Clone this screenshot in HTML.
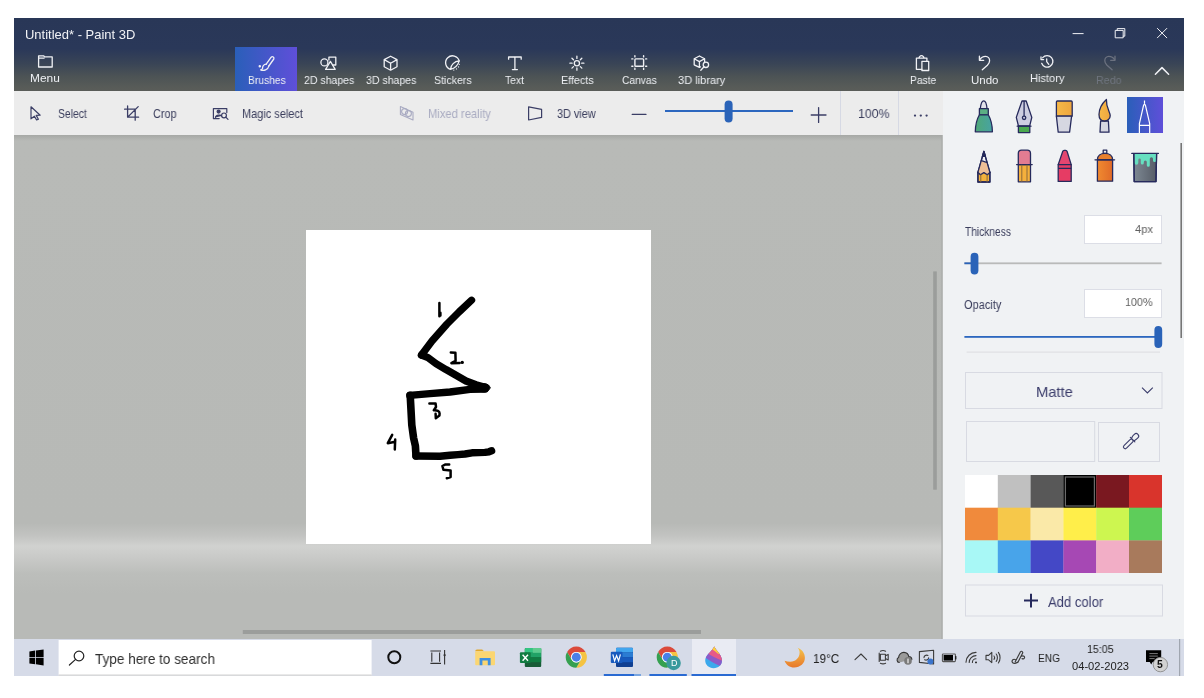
<!DOCTYPE html>
<html><head><meta charset="utf-8">
<style>
*{margin:0;padding:0;box-sizing:border-box}
html,body{width:1204px;height:698px;overflow:hidden;background:#fff;font-family:"Liberation Sans",sans-serif}
.a{position:absolute}
.t{position:absolute;line-height:1;white-space:nowrap}
#ribbon{left:14px;top:18px;width:1170px;height:73px;background:linear-gradient(to bottom,#293757 0%,#2a3859 42%,#394456 62%,#4c5355 80%,#575b58 94%,#5a5d59 100%)}
#toolbar{left:14px;top:91px;width:928.8px;height:44px;background:#ececec}
#cbg{left:14px;top:135px;width:928px;height:504px;background:linear-gradient(to bottom,#b8bab7 0%,#b7b9b6 77%,#c2c3c1 79.5%,#d1d2d0 81.6%,#c8c9c7 84%,#bcbebb 87%,#b8bab7 91%,#b8bab7 100%)}
#paper{left:306px;top:230px;width:345px;height:314px;background:#fff}
#panel{left:942.8px;top:91px;width:241.2px;height:548px;background:#f0f2f4}
#taskbar{left:14px;top:639px;width:1170px;height:37px;background:#d6dbe8}
.rl{position:absolute;line-height:1;white-space:nowrap;color:#eef0f4;font-size:10.6px;text-align:center;width:80px}
.tb{position:absolute;line-height:1;white-space:nowrap;color:#3a3d5c;font-size:10.9px}
svg{position:absolute;left:0;top:0}
.t,.rl,.tb{-webkit-font-smoothing:antialiased;will-change:transform;transform-origin:0 0}
</style></head><body>
<div id="ribbon" class="a"></div>
<div id="toolbar" class="a"></div>
<div id="cbg" class="a"></div>
<div class="a" style="left:14px;top:135px;width:928px;height:6px;background:linear-gradient(to bottom,#a6a8a5,rgba(183,185,182,0))"></div>
<div id="paper" class="a"></div>
<div id="panel" class="a"></div>
<div id="taskbar" class="a"></div>
<div class="a" style="left:235px;top:47px;width:62px;height:44px;background:linear-gradient(to right,#2a5fb9,#5f4fd9)"></div>
<div class="a" style="left:1126.5px;top:97px;width:36.5px;height:36px;background:linear-gradient(to right,#2a5fb9,#5f4fd9)"></div>
<div class="a" style="left:691.5px;top:639px;width:44.5px;height:37px;background:#e9ebf3"></div>

<svg width="1204" height="698" viewBox="0 0 1204 698">
<defs>
<linearGradient id="gMark" x1="0" x2="1"><stop offset="0" stop-color="#4fa877"/><stop offset="1" stop-color="#47a3a3"/></linearGradient>
<linearGradient id="gOr" x1="0" x2="1"><stop offset="0" stop-color="#f7b948"/><stop offset="1" stop-color="#eea63e"/></linearGradient>
<linearGradient id="gSpray" x1="0" x2="1"><stop offset="0" stop-color="#f08a30"/><stop offset="1" stop-color="#e06a28"/></linearGradient>
<linearGradient id="gBucket" x1="0" x2="1"><stop offset="0" stop-color="#7d8893"/><stop offset="1" stop-color="#565c66"/></linearGradient>
<linearGradient id="gMoon" x1="0" y1="0" x2="0" y2="1"><stop offset="0" stop-color="#f4c44c"/><stop offset="1" stop-color="#e8782a"/></linearGradient>
<linearGradient id="gP3d" x1="0" y1="0" x2="0" y2="1"><stop offset="0" stop-color="#fcd03a"/><stop offset="0.3" stop-color="#f05a8c"/><stop offset="0.6" stop-color="#9a5ad0"/><stop offset="1" stop-color="#2aa8f0"/></linearGradient>
</defs>

<!-- ===== RIBBON ICONS (white) ===== -->
<g fill="none" stroke="#f0f1f5" stroke-width="1.3" stroke-linejoin="round" stroke-linecap="round">
 <!-- menu folder -->
 <path d="M38.6,67 V55.8 H43.6 L44.6,56.9 H52.2 V67 Z M38.6,58.2 H44"/>
 <!-- brush -->
 <path d="M266.2,64.2 L271.2,57.2 A1.6,1.6 0 0 1 273.8,59 L268.8,66"/>
 <path d="M266.2,64.2 C263.6,64.4 262.4,66.4 262.6,68.2 C262.2,69.2 261.2,69.8 260.6,69.8 C263.6,71.2 268.2,69.8 268.8,66"/>
 <circle cx="259.8" cy="66.3" r="0.6" fill="#f0f1f5"/>
 <!-- 2D shapes -->
 <circle cx="324.4" cy="62.4" r="3.5"/>
 <path d="M328.9,57.2 H335.8 V65 H332.6 M328.9,57.2 V60"/>
 <path d="M330.4,61.4 L335.2,69.4 H325.6 Z"/>
 <!-- 3D shapes -->
 <path d="M390.6,56.2 L397,59.6 V66.8 L390.6,70.2 L384.2,66.8 V59.6 Z M384.2,59.6 L390.6,63.2 L397,59.6 M390.6,63.2 V70.2"/>
 <!-- stickers -->
 <path d="M450.5,69.3 A6.9,6.9 0 1 1 459.2,60.9"/>
 <path d="M450.5,69.3 C450.7,65 454.4,61.2 459.2,60.9 C458,65.2 454.8,68.3 450.5,69.3"/>
 <circle cx="459.3" cy="64.3" r="0.65" fill="#f0f1f5" stroke="none"/>
 <circle cx="458.5" cy="66.9" r="0.65" fill="#f0f1f5" stroke="none"/>
 <circle cx="456.5" cy="68.9" r="0.65" fill="#f0f1f5" stroke="none"/>
 <circle cx="453.8" cy="70.1" r="0.65" fill="#f0f1f5" stroke="none"/>
 <!-- text T -->
 <path d="M508.6,59.2 V57 H521.2 V59.2 M514.9,57 V69.6 M512.4,69.6 H517.4"/>
 <!-- effects sun -->
 <circle cx="576.9" cy="63.2" r="2.6"/>
 <path d="M576.9,56.2 V58.4 M576.9,68 V70.2 M569.9,63.2 H572.1 M581.7,63.2 H583.9 M571.95,58.25 L573.5,59.8 M580.3,66.6 L581.85,68.15 M571.95,68.15 L573.5,66.6 M580.3,59.8 L581.85,58.25"/>
 <!-- canvas -->
 <rect x="634.9" y="58.9" width="8.7" height="7.4" rx="0.8" stroke-width="1.4"/>
 <path d="M634.9,55.8 V56.9 M643.6,55.8 V56.9 M634.9,68.3 V69.4 M643.6,68.3 V69.4 M631.8,58.9 H632.9 M645.6,58.9 H646.7 M631.8,66.3 H632.9 M645.6,66.3 H646.7" stroke-width="1.4"/>
 <!-- 3D library -->
 <path d="M699.4,56 L704.6,58.8 V62.6 M699.4,56 L694.2,58.8 V64.8 L699.4,67.4 L700.4,66.9 M694.2,58.8 L699.4,61.6 L704.6,58.8 M699.4,61.6 V67.4"/>
 <circle cx="705.9" cy="64.8" r="2.7"/>
 <path d="M704,66.8 L700.8,70.2"/>
 <!-- paste -->
 <path d="M921.9,69.3 H916.4 V58.1 H926.9 V61.3 M918.9,58.1 L919.6,56.6 Q921.5,54.6 923.4,56.6 L924.1,58.1"/>
 <rect x="921.9" y="61.3" width="6.8" height="9.2"/>
 <!-- undo -->
 <path d="M979.8,59.8 C981,57.6 983.2,56.4 985.6,56.4 C988,56.4 989.6,58.4 989.6,60.8 C989.6,62.6 988.6,64 987.4,65.2 L982.3,69.8"/>
 <path d="M979.4,56.2 V60.3 H983.7"/>
 <!-- history -->
 <path d="M1041.7,63.3 A5.75,5.75 0 1 0 1042.7,57.7"/>
 <path d="M1041,57 V59.6 H1043.6"/>
 <path d="M1046.7,58.8 V61.6 L1048.8,64.3"/>
 <!-- window controls -->
 <path d="M1073,33.6 H1083.2" stroke-width="1"/>
 <path d="M1115.6,30.4 H1123.2 V37.8 H1115.6 Z M1117.2,30.4 V28.6 H1124.8 V36.2 H1123.2" stroke-width="1"/>
 <path d="M1157.4,28.4 L1166.8,37.8 M1166.8,28.4 L1157.4,37.8" stroke-width="1"/>
 <path d="M1155.4,74.2 L1162,67.6 L1168.6,74.2" stroke-width="1.5"/>
</g>
<!-- redo disabled -->
<g fill="none" stroke="#6b717f" stroke-width="1.3" stroke-linecap="round" stroke-linejoin="round">
 <path d="M1114.6,59.8 C1113.4,57.6 1111.2,56.4 1108.8,56.4 C1106.4,56.4 1104.8,58.4 1104.8,60.8 C1104.8,62.6 1105.8,64 1107,65.2 L1112.1,69.8"/>
 <path d="M1115,56.2 V60.3 H1110.7"/>
</g>

<!-- ===== TOOLBAR ICONS ===== -->
<g fill="none" stroke="#3b3e66" stroke-width="1.2" stroke-linejoin="round" stroke-linecap="round">
 <!-- select cursor -->
 <path d="M31,106.8 L40.2,115.2 L36.2,115.4 L38.4,119.2 L36.6,120 L34.4,116.2 L31,118.8 Z"/>
 <!-- crop -->
 <path d="M127.6,106 V117.2 H138.6 M124.6,109.2 H135.2 V120.2 M128.2,116.6 L138.2,106.6" stroke-width="1.3"/>
 <!-- magic select -->
 <path d="M219.2,118.6 H213.4 V108.6 H226.8 V112.6"/>
 <circle cx="218.6" cy="111.6" r="1.5" fill="#3b3e66"/>
 <path d="M215.4,117.4 C215.8,114.6 221.4,114.6 221.6,116" fill="#3b3e66"/>
 <circle cx="224" cy="115.4" r="2.4"/>
 <path d="M225.8,117.2 L228,119.4"/>
 <!-- 3D view -->
 <path d="M528.6,106.8 L541.6,109.4 V117.4 L528.6,120 Z"/>
 <!-- minus plus -->
 <path d="M632.2,114.4 H646" stroke-width="1.2"/>
 <path d="M811.2,115 H826 M818.6,107.6 V122.4" stroke-width="1.3"/>
 <!-- dots -->
 <circle cx="915" cy="115.6" r="1.15" fill="#3b3e66" stroke="none"/>
 <circle cx="920.8" cy="115.6" r="1.15" fill="#3b3e66" stroke="none"/>
 <circle cx="926.6" cy="115.6" r="1.15" fill="#3b3e66" stroke="none"/>
</g>
<!-- mixed reality disabled -->
<g fill="none" stroke="#a9abc2" stroke-width="1.1" stroke-linejoin="round">
 <path d="M400.4,106.6 L413,112.2 V120 L400.4,114.4 Z"/>
 <circle cx="404.6" cy="111.6" r="3"/>
 <circle cx="408.4" cy="113.6" r="3"/>
</g>
<!-- toolbar separators & zoom slider -->
<rect x="840" y="91" width="1" height="44" fill="#d6d9e4"/>
<rect x="898" y="91" width="1" height="44" fill="#d6d9e4"/>
<rect x="665" y="110" width="128" height="2" fill="#2c67bf"/>
<rect x="724.6" y="100.4" width="8" height="22" rx="4" fill="#2a63b8"/>
<!-- canvas scrollbar -->
<rect x="933.2" y="271.4" width="3.6" height="218.3" fill="#9b9d9b"/>
<rect x="941.4" y="135" width="1.4" height="504" fill="#a9aba9"/>
<rect x="242.8" y="630" width="458.2" height="4" fill="#9b9d9b"/>

</svg>

<!-- title -->

<!-- ribbon labels -->

<!-- toolbar labels -->

<svg width="1204" height="698" viewBox="0 0 1204 698">
<g stroke="#262a5c" stroke-width="1.3" stroke-linejoin="round" stroke-linecap="round">
 <!-- marker -->
 <path d="M980.3,108.6 C980.8,104 982,100.8 983.7,100.8 C985.4,100.8 986.6,104 987,108.6 Z" fill="#e2e2ea"/>
 <rect x="979.4" y="108.6" width="8.9" height="6.2" fill="#5cae84"/>
 <path d="M979.4,114.8 C977,119 975.4,125 975.3,131.8 H992.4 C992.3,125 990.7,119 988.3,114.8 Z" fill="url(#gMark)"/>
 <!-- pen nib -->
 <path d="M1022,101 H1026.2 L1031.8,117.4 L1029.6,126.2 H1018.5 L1016.3,117.4 Z" fill="#cdcde0"/>
 <path d="M1024.1,101.5 V116" fill="none"/>
 <circle cx="1024.1" cy="117.8" r="1.7" fill="#cdcde0"/>
 <rect x="1018.4" y="126.2" width="11.4" height="6.4" fill="#4aa84e"/>
 <path d="M1017.2,126.2 H1031" fill="none"/>
 <!-- flat brush -->
 <path d="M1056.4,102 Q1056.4,101 1057.4,101 H1071.2 Q1072.2,101 1072.2,102 V116.2 H1056.4 Z" fill="url(#gOr)"/>
 <path d="M1056.4,116.2 L1058.2,132.2 H1069.6 L1071.6,116.2 Z" fill="#d6d7e1"/>
 <!-- round brush -->
 <path d="M1100.6,121 L1100,132.2 H1109 L1108.4,121 Z" fill="#d6d7e1"/>
 <path d="M1106.4,99.4 C1101.8,103.6 1099,109.8 1099,114.6 C1099,118.8 1101.4,121 1104.5,121 C1107.6,121 1110.2,118.8 1110.2,115.8 C1110.2,111.6 1106,108 1106.4,99.4 Z" fill="url(#gOr)"/>
 <!-- pencil -->
 <path d="M983.9,151.4 L977.9,172.4 H989.9 Z" fill="#f2f2f6"/>
 <rect x="977.9" y="172.4" width="12" height="9.6" fill="#f4b23c"/>
 <path d="M981.4,160.6 L977.9,172.4 L980.5,174.8 L983.9,172.6 L987.3,174.8 L989.9,172.4 L986.6,162.4 Z" fill="#eebf96" stroke="none"/>
 <path d="M981.4,160.6 L986.6,162.4 M977.9,172.4 L980.5,174.8 L983.9,172.6 L987.3,174.8 L989.9,172.4" fill="none"/>
 <path d="M983.9,151.4 L977.9,172.4 V182 H989.9 V172.4 Z" fill="none"/>
 <path d="M980.8,175 V182 M987.1,175 V182" fill="none" stroke="#8a6a3a" stroke-width="1"/>
 <path d="M983.9,151.4 L982.4,156.4 H985.4 Z" fill="#262a5c"/>
 <!-- eraser pencil -->
 <path d="M1018.3,164.6 V153.4 Q1018.3,150.2 1021.5,150.2 H1027.3 Q1030.5,150.2 1030.5,153.4 V164.6 Z" fill="#e27c92"/>
 <rect x="1018.3" y="164.6" width="12.2" height="17.2" fill="#f4b03c"/>
 <path d="M1016.6,164.6 H1032.2" fill="none"/>
 <path d="M1021.8,165.2 V181.4 M1027,165.2 V181.4" fill="none" stroke="#8a6a3a" stroke-width="1"/>
 <!-- crayon -->
 <path d="M1062.6,151.8 Q1062.9,150.4 1064.2,150.4 H1065.6 Q1066.9,150.4 1067.2,151.8 L1071.2,164.6 H1058.2 Z" fill="#e44670"/>
 <rect x="1058.2" y="164.6" width="13" height="16.8" fill="#e63c64"/>
 <path d="M1058.6,168.4 H1070.8" fill="none" stroke-width="1.1"/>
 <!-- spray -->
 <rect x="1103.2" y="150.2" width="3.6" height="3.2" fill="#f0f2f4"/>
 <path d="M1097.4,159.8 C1097.4,155.8 1100.6,153.4 1105,153.4 C1109.4,153.4 1112.6,155.8 1112.6,159.8 Z" fill="#e8802e"/>
 <rect x="1097.4" y="159.8" width="15.2" height="21.4" fill="url(#gSpray)"/>
 <path d="M1095,159.8 H1114.6" fill="none"/>
 <!-- bucket -->
 <path d="M1133.8,153.6 L1134.2,181.6 H1156 L1156.6,153.6 Z" fill="url(#gBucket)"/>
 <path d="M1134.6,154 H1156.3 V160.4 A1.65,1.65 0 0 1 1153,160.4 V158.8 A1.6,1.6 0 0 0 1149.8,158.8 V165.2 A1.5,1.5 0 0 1 1146.8,165.2 V162 A1.5,1.5 0 0 0 1143.8,162 V163 A1.5,1.5 0 0 1 1140.8,163 V159.8 A1.25,1.25 0 0 0 1138.3,159.8 V162.8 A1.85,1.85 0 0 1 1134.6,162.8 Z" fill="#66dfc0" stroke="none"/>
 <path d="M1133.8,153.6 L1134.2,181.6 H1156 L1156.6,153.6" fill="none"/>
 <path d="M1131.8,153.4 H1158.4" fill="none"/>
</g>
<!-- selected pen (white) -->
<g fill="none" stroke="#fff" stroke-width="1.2" stroke-linejoin="round">
 <path d="M1144.5,100.6 V103.8 M1139.4,133 V123.6 L1143.6,105.2 Q1144.5,103.4 1145.4,105.2 L1149.7,123.6 V133 M1139.4,125.4 H1149.7"/>
</g>
<!-- scrollbar -->
<rect x="1180.4" y="143" width="1.6" height="195" fill="#767676"/>


<!-- thickness/opacity boxes -->
<rect x="1084.5" y="215.5" width="77" height="28" fill="#fff" stroke="#dcdee6" stroke-width="1"/>
<rect x="1084.5" y="289.5" width="77" height="28" fill="#fff" stroke="#dcdee6" stroke-width="1"/>
<!-- thickness slider -->
<rect x="964.4" y="262.4" width="197.2" height="1.8" fill="#b9bab9"/>
<rect x="964.4" y="262.4" width="8" height="1.8" fill="#2a63b8"/>
<rect x="970.6" y="252.8" width="7.8" height="21.6" rx="3.9" fill="#2a63b8"/>
<!-- opacity slider -->
<rect x="964.4" y="336" width="194" height="1.8" fill="#2c67bf"/>
<rect x="1154.4" y="326" width="7.8" height="22" rx="3.9" fill="#2a63b8"/>
<rect x="966.6" y="351.6" width="193.4" height="1" fill="#dcdde0"/>
<!-- matte dropdown -->
<rect x="965.5" y="372.5" width="196.5" height="36" fill="none" stroke="#d8dae2" stroke-width="1"/>
<path d="M1142,387.6 L1147.4,393 L1152.8,387.6" fill="none" stroke="#3b3d6b" stroke-width="1.1"/>
<!-- color preview + eyedropper -->
<rect x="966.5" y="421.5" width="128.2" height="40" fill="none" stroke="#d8dae2" stroke-width="1"/>
<rect x="1098.5" y="422.5" width="61" height="39" fill="none" stroke="#d8dae2" stroke-width="1"/>
<g fill="none" stroke="#3b3d6b" stroke-width="1.1" stroke-linejoin="round" stroke-linecap="round" transform="translate(1132.6,439.6) rotate(-45)">
 <rect x="-12.2" y="-1.8" width="12.2" height="3.6" rx="1.8"/>
 <path d="M0,-3.2 V3.2"/>
 <path d="M0.2,-1.8 C1.2,-1.8 1.6,-2.5 3.4,-2.5 H5 A2.5,2.5 0 0 1 5,2.5 H3.4 C1.6,2.5 1.2,1.8 0.2,1.8"/>
</g>
<!-- palette -->
<g>
<rect x="965" y="475" width="33" height="33" fill="#ffffff"/>
<rect x="997.8" y="475" width="33" height="33" fill="#c0c0c0"/>
<rect x="1030.6" y="475" width="33" height="33" fill="#585858"/>
<rect x="1063.4" y="475" width="33" height="33" fill="#000000"/>
<rect x="1096.2" y="475" width="33" height="33" fill="#7a1820"/>
<rect x="1129" y="475" width="33" height="33" fill="#d9342c"/>
<rect x="965" y="507.7" width="33" height="33" fill="#f08a3c"/>
<rect x="997.8" y="507.7" width="33" height="33" fill="#f6c84a"/>
<rect x="1030.6" y="507.7" width="33" height="33" fill="#fae9a8"/>
<rect x="1063.4" y="507.7" width="33" height="33" fill="#ffee4a"/>
<rect x="1096.2" y="507.7" width="33" height="33" fill="#cdf650"/>
<rect x="1129" y="507.7" width="33" height="33" fill="#5ecd5a"/>
<rect x="965" y="540.4" width="33" height="32.6" fill="#a8f8f6"/>
<rect x="997.8" y="540.4" width="33" height="32.6" fill="#48a4ea"/>
<rect x="1030.6" y="540.4" width="33" height="32.6" fill="#4448c6"/>
<rect x="1063.4" y="540.4" width="33" height="32.6" fill="#a648b4"/>
<rect x="1096.2" y="540.4" width="33" height="32.6" fill="#f2aec6"/>
<rect x="1129" y="540.4" width="33" height="32.6" fill="#a87a5c"/>
<rect x="1065.4" y="477" width="29" height="29" fill="none" stroke="#6a6a6a" stroke-width="1.2"/>
</g>
<!-- add color -->
<rect x="965.5" y="585" width="197" height="31" fill="none" stroke="#d8dae2" stroke-width="1"/>
<path d="M1024,600.6 H1038 M1031,593.8 V607.4" stroke="#262a5c" stroke-width="2"/>
</svg>

<!-- panel labels -->


<svg width="1204" height="698" viewBox="0 0 1204 698">
<!-- search box -->
<rect x="58.6" y="640" width="313" height="35.6" fill="#fff"/>
<rect x="58.6" y="674.6" width="313" height="1" fill="#c8c8c8"/>
<!-- windows logo -->
<path d="M29.4,651.4 L35.2,650.6 V657 H29.4 Z M36,650.5 L43.6,649.4 V657 H36 Z M29.4,657.8 H35.2 V664.2 L29.4,663.4 Z M36,657.8 H43.6 V665.4 L36,664.3 Z" fill="#000"/>
<!-- search icon -->
<g fill="none" stroke="#222" stroke-width="1.2" stroke-linecap="round">
 <circle cx="79" cy="656" r="4.8"/>
 <path d="M75.6,659.4 L69.4,665"/>
</g>
<!-- cortana -->
<circle cx="394.3" cy="657.3" r="6" fill="none" stroke="#111" stroke-width="2"/>
<!-- task view -->
<g fill="none" stroke="#333" stroke-width="1.1">
 <path d="M430.4,651 H441 M430.4,663.4 H441 M431.8,652.6 V661.8 M439.6,652.6 V661.8 M444.6,650 V664.4"/>
</g>
<circle cx="444.6" cy="655.2" r="1.1" fill="#333"/>
<!-- file explorer -->
<path d="M475.2,651.4 Q475.2,649.6 477,649.6 H482.2 L484,651.2 H475.2 Z" fill="#e2a82a"/>
<rect x="475.2" y="651.2" width="19.8" height="14" rx="1" fill="#fbd672"/>
<path d="M479.6,665.2 V658 H490.6 V665.2 H487.8 V660.6 H482.4 V665.2 Z" fill="#3e8fe2"/>
<!-- excel -->
<rect x="524.8" y="648" width="16.4" height="19" rx="1" fill="#185c37"/>
<rect x="524.8" y="648" width="16.4" height="4.8" rx="1" fill="#33c481"/>
<rect x="524.8" y="652.6" width="16.4" height="4.8" fill="#21a366"/>
<rect x="524.8" y="657.4" width="16.4" height="4.8" fill="#107c41"/>
<rect x="532.8" y="648" width="8.4" height="4.8" fill="#5ecb8e"/>
<rect x="519.9" y="652.3" width="10.8" height="10.8" rx="1" fill="#107c41"/>
<path d="M522.6,654.8 L528,660.8 M528,654.8 L522.6,660.8" stroke="#fff" stroke-width="1.4"/>
<!-- chrome -->
<g transform="translate(576.3,657.2)">
 <g transform="scale(10.6)">
 <path d="M0,-0.5 L0.866,-0.5 A1,1 0 0 0 -0.866,-0.5 L-0.433,0.25 A0.5,0.5 0 0 1 0,-0.5 Z" fill="#db4a3a"/>
 <path d="M0.433,0.25 L0,1 A1,1 0 0 0 0.866,-0.5 L0,-0.5 A0.5,0.5 0 0 1 0.433,0.25 Z" fill="#f5c342"/>
 <path d="M-0.433,0.25 L-0.866,-0.5 A1,1 0 0 0 0,1 L0.433,0.25 A0.5,0.5 0 0 1 -0.433,0.25 Z" fill="#36a050"/>
 <circle r="0.5" fill="#fff"/>
 <circle r="0.42" fill="#4a80e8"/>
 </g>
</g>
<!-- word -->
<rect x="616" y="647.7" width="17" height="19.4" rx="1" fill="#103f91"/>
<rect x="616" y="647.7" width="17" height="4.9" rx="1" fill="#41a5ee"/>
<rect x="616" y="652.5" width="17" height="4.9" fill="#2b7cd3"/>
<rect x="616" y="657.3" width="17" height="4.9" fill="#185abd"/>
<rect x="610.8" y="651.7" width="11.7" height="11.3" rx="1" fill="#185abd"/>
<path d="M612.8,654.4 L614.6,660.8 L616.6,655.6 L618.6,660.8 L620.4,654.4" fill="none" stroke="#fff" stroke-width="1.2"/>
<rect x="603.8" y="674" width="30.2" height="2" fill="#2a6ad2"/>
<rect x="634" y="674" width="7" height="2" fill="#7aa6e0"/>
<!-- chrome D -->
<g transform="translate(667.3,657.2)">
 <g transform="scale(10.6)">
 <path d="M0,-0.5 L0.866,-0.5 A1,1 0 0 0 -0.866,-0.5 L-0.433,0.25 A0.5,0.5 0 0 1 0,-0.5 Z" fill="#db4a3a"/>
 <path d="M0.433,0.25 L0,1 A1,1 0 0 0 0.866,-0.5 L0,-0.5 A0.5,0.5 0 0 1 0.433,0.25 Z" fill="#f5c342"/>
 <path d="M-0.433,0.25 L-0.866,-0.5 A1,1 0 0 0 0,1 L0.433,0.25 A0.5,0.5 0 0 1 -0.433,0.25 Z" fill="#36a050"/>
 <circle r="0.5" fill="#fff"/>
 <circle r="0.42" fill="#4a80e8"/>
 </g>
</g>
<circle cx="673.6" cy="663" r="7.2" fill="#3a9a9c"/>
<rect x="649.4" y="674" width="37.4" height="2" fill="#2a6ad2"/>
<!-- paint 3d -->
<clipPath id="dropc"><path d="M714.4,646.4 C716,651 721.9,654.2 721.9,660.6 C721.9,665.2 718.4,668.2 713.6,668.2 C708.8,668.2 705.2,665 705.2,660.6 C705.2,655 711,652.4 714.4,646.4 Z"/></clipPath>
<g clip-path="url(#dropc)">
 <rect x="700" y="643" width="28" height="28" fill="#3ba8ec"/>
 <path d="M700,643 H728 V668 L719,665.6 C714,663.4 709,660.4 705.6,657.8 L700,654.6 Z" fill="#8c5ac8"/>
 <path d="M700,643 H728 V661 L721.7,660.6 C716.4,658.4 711.4,655.6 706.8,653 L700,649.6 Z" fill="#e65a88"/>
 <path d="M700,643 H728 V656 L718,653.8 C716.2,652 714,650.4 711.6,649 L708,646 V643 Z" fill="#fcd23c"/>
</g>
<rect x="691.5" y="674" width="44.5" height="2" fill="#2a6ad2"/>
<!-- moon -->
<path d="M797.6,647.8 C802.2,649.6 804.9,653.4 804.9,657.8 C804.9,663.4 800.2,667.5 794.2,667.5 C789.8,667.5 786,664.8 784.6,660.7 C786.4,661.4 788.4,661.8 790.2,661.8 C795.6,661.8 799.6,657.8 799.6,652.6 C799.6,650.8 798.9,649.2 797.6,647.8 Z" fill="url(#gMoon)"/>
<!-- tray icons -->
<g fill="none" stroke="#3a3a3a" stroke-width="1.1" stroke-linecap="round" stroke-linejoin="round">
 <path d="M855,659.6 L861,654 L866.6,659.6"/>
 <!-- meet -->
 <path d="M879.2,653 V661.4 M880.4,651.2 C882,650.4 884,650.4 885.6,651.2 M880.4,663.2 C882,664 884,664 885.6,663.2 M880.4,654.2 H885.4 V660.2 H880.4 Z M885.4,655.8 L888.2,654.4 V660 L885.4,658.6"/>
 <!-- cloud -->
 <path d="M899.2,662.4 C896.8,662.4 896.2,658.6 898.6,657.6 C898.6,654.6 901.2,652.2 904,652.4 C906.8,652.6 908.4,654.6 908.8,656.6 C910.6,656.6 911.8,658 911.8,659.6" stroke="#333" fill="#9a9a9a"/>
 <!-- screen -->
 <path d="M919.4,651.6 L933.6,650.2 V664 L919.4,662.4 Z"/>
 <path d="M924,657.6 C924,655.8 926,654.6 928,655.4 M928.6,657.8 C928.6,659.6 926.6,660.6 924.6,659.8"/>
 <!-- battery -->
 <rect x="942.4" y="654" width="13" height="7.6" rx="0.8" stroke="#555"/>
 <path d="M955.8,656.6 V659" stroke="#111" stroke-width="1.2"/>
 <!-- wifi -->
 <path d="M966,662.2 A10,10 0 0 1 976,652.4 M969.2,662.4 A6.8,6.8 0 0 1 976,655.6 M972.4,662.4 A3.6,3.6 0 0 1 976,658.8"/>
 <!-- volume -->
 <path d="M986,655.4 H988.6 L991.8,652.4 V662.6 L988.6,659.8 H986 Z M994,656 C994.8,657 994.8,658.4 994,659.4 M996.2,654 C997.8,656 997.8,659.6 996.2,661.4 M998.4,652.4 C1000.6,655.4 1000.6,660.2 998.4,663"/>
 <!-- pen -->
 <path d="M1020.2,652.2 L1015.2,661.8 M1022.8,652.8 L1017.8,662.6 M1020.2,652.2 Q1021.8,650 1022.8,652.8 M1015.6,659.8 C1013.4,658.4 1011.6,660.2 1012.2,662 C1012.8,663.8 1015.6,663.6 1017.4,662.2 M1021.6,656.2 C1023.6,655.2 1025,656.6 1024.4,658 C1024,658.8 1023,659 1022,658.6" stroke-width="1.15"/>
</g>
<circle cx="976" cy="662.4" r="0.9" fill="#111"/>
<circle cx="908" cy="660.9" r="3.8" fill="#7a7a7a"/>
<rect x="907.3" y="658.6" width="1.4" height="4.6" fill="#e0e0e0"/>
<rect x="943.6" y="655" width="9.4" height="5.6" fill="#000"/>
<circle cx="930.4" cy="661.4" r="3" fill="#3a74cc"/>
<!-- notification -->
<path d="M1146,650.2 H1161.2 V662 H1152.6 L1151.2,664.6 L1149.8,662 H1146 Z" fill="#000"/>
<path d="M1149.4,653.6 H1157.8 M1149.4,656.1 H1157.8 M1149.4,658.6 H1154.6" stroke="#888" stroke-width="0.9"/>
<circle cx="1160.4" cy="664.6" r="7.2" fill="#d2d2d2" stroke="#8a8a8a" stroke-width="0.9"/>
<rect x="1179" y="639" width="1.2" height="37" fill="#a0a6b0"/>
</svg>

<!-- taskbar text -->
<div class="t" style="left:671px;top:658.5px;font-size:9px;color:#fff">D</div>
<div class="t" style="left:1157.2px;top:660.2px;font-size:10.4px;font-weight:bold;color:#111">5</div>

<!-- drawing -->
<svg width="1204" height="698" viewBox="0 0 1204 698">
<g fill="none" stroke="#000" stroke-linecap="round" stroke-linejoin="round">
 <path d="M471.6,300.2 L459,312 L447,324 L432,341 L421.5,355" stroke-width="7.2"/>
 <path d="M421.5,355 L428,357.6 L436,363.6 L446,369.6 L456,375.2 L466,381 L476,384.8 L486,387.6" stroke-width="7.4"/>
 <ellipse cx="484" cy="387.8" rx="6" ry="4.2"/>
 <path d="M485,389 L470,389.4 L450,392 L430,393.6 L409.8,395.4" stroke-width="7.4"/>
 <path d="M410.2,395.4 L411,410 L411.8,425 L413.6,438 L415.4,446 L416,456" stroke-width="7.6"/>
 <path d="M416,456 L440,456.3 L450,455.3 L458,454.6 L465,454 L472,452.8 L485,452.4 L489,451.8 L491.6,450.8" stroke-width="7.4"/>
</g>
<g fill="none" stroke="#000" stroke-width="2.5" stroke-linecap="round" stroke-linejoin="round">
 <path d="M439.4,303 L439.4,316.2 M440.4,312.8 L440.4,315.4"/>
 <path d="M450.8,352.4 L455.4,352.8 L455.6,360.8 L451.4,363.2 L459.6,363"/>
 <circle cx="462.2" cy="362.4" r="1.7" fill="#000" stroke="none"/>
 <path d="M429.4,403.5 L435.6,403.6 L436,407 L433.8,410.2 C437,410 439.6,411 439.6,413.4 L439.4,415.6 L435.8,418.2 L435.6,413.8"/>
 <path d="M392.2,434.8 L387.8,443.2 L395.2,441.8 M395.2,439.6 L394.8,449.4"/>
 <path d="M449.2,464.4 L445.5,464.4 L442.4,466 L443.4,469.8 L450.6,470.4 L450.6,477 L446.8,478.2"/>
</g>
</svg>


<!-- fitted texts -->
<div class="t" style="left:24.76px;top:28.52px;font-size:12.90px;transform:scaleX(1.007);color:#f2f3f6">Untitled* - Paint 3D</div>
<div class="t" style="left:30.05px;top:72.44px;font-size:11.60px;transform:scaleX(1.027);color:#eef0f4">Menu</div>
<div class="t" style="left:248.08px;top:75.04px;font-size:11.50px;transform:scaleX(0.894);color:#eef0f4">Brushes</div>
<div class="t" style="left:303.87px;top:75.15px;font-size:11.50px;transform:scaleX(0.914);color:#eef0f4">2D shapes</div>
<div class="t" style="left:366.08px;top:75.09px;font-size:11.50px;transform:scaleX(0.916);color:#eef0f4">3D shapes</div>
<div class="t" style="left:434.07px;top:75.09px;font-size:11.50px;transform:scaleX(0.920);color:#eef0f4">Stickers</div>
<div class="t" style="left:505.39px;top:75.09px;font-size:11.50px;transform:scaleX(0.894);color:#eef0f4">Text</div>
<div class="t" style="left:560.54px;top:75.09px;font-size:11.50px;transform:scaleX(0.935);color:#eef0f4">Effects</div>
<div class="t" style="left:622.29px;top:75.09px;font-size:11.50px;transform:scaleX(0.891);color:#eef0f4">Canvas</div>
<div class="t" style="left:677.86px;top:75.09px;font-size:11.50px;transform:scaleX(0.960);color:#eef0f4">3D library</div>
<div class="t" style="left:909.88px;top:75.04px;font-size:11.50px;transform:scaleX(0.891);color:#eef0f4">Paste</div>
<div class="t" style="left:971.39px;top:75.03px;font-size:11.50px;transform:scaleX(0.984);color:#eef0f4">Undo</div>
<div class="t" style="left:1029.51px;top:73.19px;font-size:11.50px;transform:scaleX(0.964);color:#eef0f4">History</div>
<div class="t" style="left:1096.14px;top:75.15px;font-size:11.50px;transform:scaleX(0.935);color:#6f757f">Redo</div>
<div class="t" style="left:58.18px;top:108.39px;font-size:12.10px;transform:scaleX(0.857);color:#3a3d5c">Select</div>
<div class="t" style="left:152.86px;top:108.44px;font-size:12.10px;transform:scaleX(0.898);color:#3a3d5c">Crop</div>
<div class="t" style="left:242.12px;top:108.44px;font-size:12.10px;transform:scaleX(0.907);color:#3a3d5c">Magic select</div>
<div class="t" style="left:427.60px;top:108.44px;font-size:12.10px;transform:scaleX(0.927);color:#a9abc1">Mixed reality</div>
<div class="t" style="left:556.56px;top:108.44px;font-size:12.10px;transform:scaleX(0.899);color:#3a3d5c">3D view</div>
<div class="t" style="left:858.02px;top:107.14px;font-size:13.00px;transform:scaleX(0.946);color:#3a3d5c">100%</div>
<div class="t" style="left:964.80px;top:225.74px;font-size:12.50px;transform:scaleX(0.816);color:#3a3d5c">Thickness</div>
<div class="t" style="left:1134.58px;top:223.10px;font-size:11.60px;transform:scaleX(0.960);color:#606060">4px</div>
<div class="t" style="left:964.25px;top:299.34px;font-size:12.50px;transform:scaleX(0.879);color:#3a3d5c">Opacity</div>
<div class="t" style="left:1124.94px;top:296.69px;font-size:11.80px;transform:scaleX(0.913);color:#606060">100%</div>
<div class="t" style="left:1035.82px;top:384.18px;font-size:15.00px;transform:scaleX(0.980);color:#3b3d6b">Matte</div>
<div class="t" style="left:1047.60px;top:595.38px;font-size:14.00px;transform:scaleX(0.935);color:#3b3d6b">Add color</div>
<div class="t" style="left:95.43px;top:652.38px;font-size:14.30px;transform:scaleX(0.949);color:#2e2e2e">Type here to search</div>
<div class="t" style="left:813.06px;top:652.08px;font-size:13.60px;transform:scaleX(0.868);color:#222">19°C</div>
<div class="t" style="left:1038.19px;top:651.99px;font-size:11.70px;transform:scaleX(0.867);color:#222">ENG</div>
<div class="t" style="left:1087.15px;top:643.75px;font-size:11.00px;transform:scaleX(0.966);color:#222">15:05</div>
<div class="t" style="left:1071.55px;top:660.75px;font-size:11.00px;transform:scaleX(1.014);color:#222">04-02-2023</div>
</body></html>
